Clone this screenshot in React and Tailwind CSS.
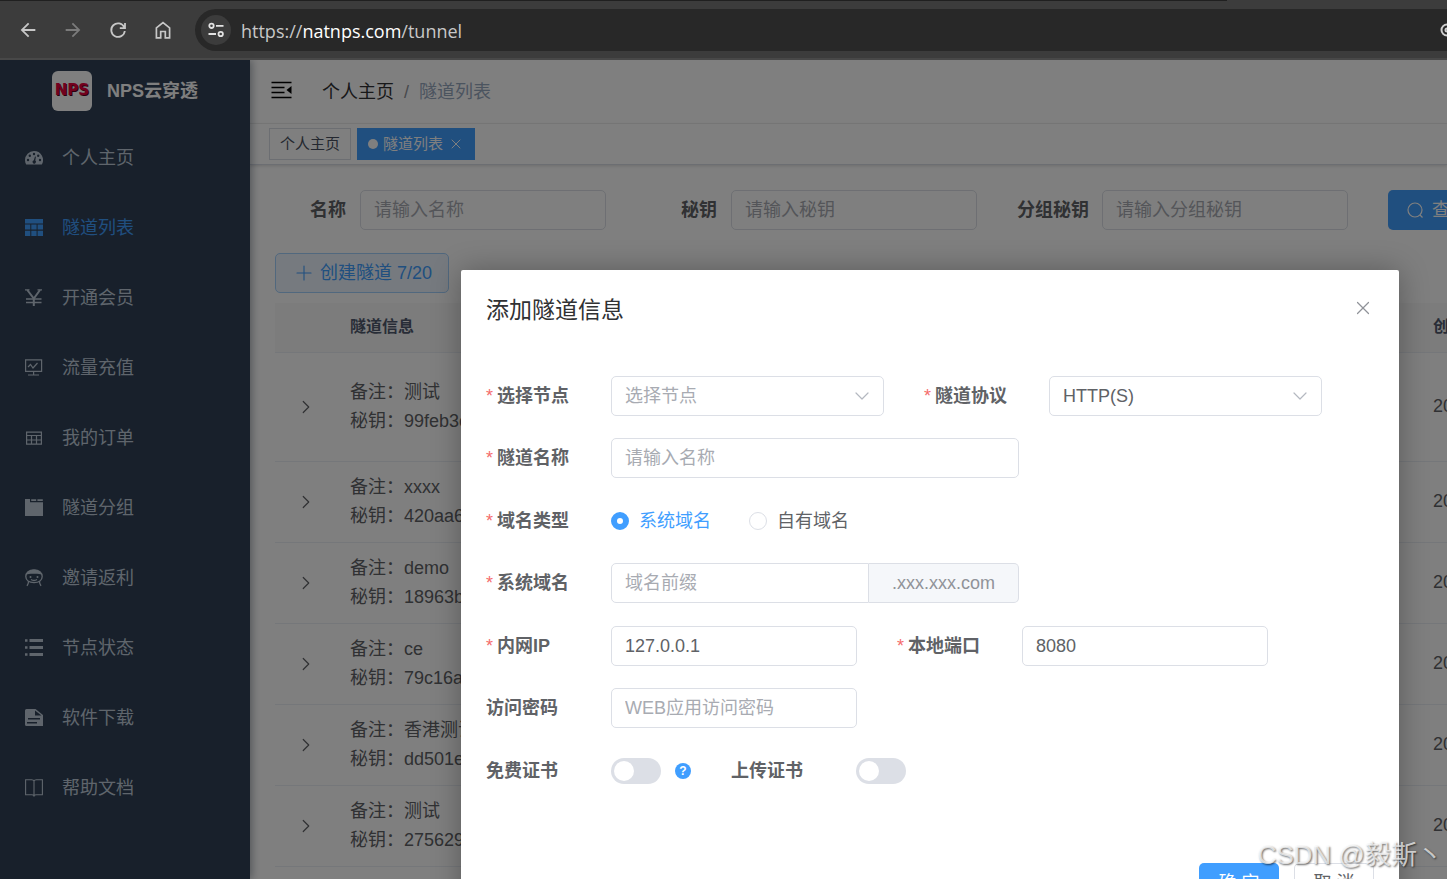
import { useState } from "react";
import { MdArrowBack, MdArrowForward } from "react-icons/md";
import { ChevronDown, ChevronRight, Plus, X } from "lucide-react";

const menus = [
  { name: "个人主页", icon: "dashboard" },
  { name: "隧道列表", icon: "table" },
  { name: "开通会员", icon: "yen" },
  { name: "流量充值", icon: "board" },
  { name: "我的订单", icon: "grid" },
  { name: "隧道分组", icon: "folder" },
  { name: "邀请返利", icon: "people" },
  { name: "节点状态", icon: "list" },
  { name: "软件下载", icon: "file" },
  { name: "帮助文档", icon: "book" },
];

const tunnels = [
  { remark: "测试", secret: "99feb3e" },
  { remark: "xxxx", secret: "420aa6" },
  { remark: "demo", secret: "18963b" },
  { remark: "ce", secret: "79c16a" },
  { remark: "香港测试", secret: "dd501e" },
  { remark: "测试", secret: "275629" },
  { remark: "", secret: "" },
];

const filters = [
  { id: "q-name", label: "名称", placeholder: "请输入名称" },
  { id: "q-key", label: "秘钥", placeholder: "请输入秘钥" },
  { id: "q-group", label: "分组秘钥", placeholder: "请输入分组秘钥" },
];

const icons = {
  dashboard: (
    <>
      <path
        fill="currentColor"
        d="M9 2a9 9 0 0 0-9 9c0 1.700.4 3.200 1.200 4.500h15.600A9 9 0 0 0 9 2Z"
      />
      <g className="fill-[#304156]">
        <circle cx="3" cy="11" r="1.200" />
        <circle cx="4.800" cy="6.800" r="1.200" />
        <circle cx="9" cy="5" r="1.200" />
        <circle cx="13.200" cy="6.800" r="1.200" />
        <circle cx="15" cy="11" r="1.200" />
        <path d="m10 7.500.9.200-.6 3.800a1.700 1.700 0 1 1-1.500-.3Z" />
      </g>
    </>
  ),
  table: (
    <path
      fill="currentColor"
      d="M0 0h18v4.500H0zM0 5.500h5.300v5H0zM6.300 5.500h5.300v5H6.300zM12.600 5.500H18v5h-5.400zM0 11.700h5.300v5.300H0zM6.300 11.700h5.300v5.300H6.300zM12.600 11.700H18v5.300h-5.400z"
    />
  ),
  yen: (
    <>
      <path
        stroke="currentColor"
        fill="none"
        strokeWidth="2"
        d="M2.300 1 8.800 9.500 15 1M8.800 9v8"
      />
      <path
        stroke="currentColor"
        fill="none"
        strokeWidth="1.300"
        d="M0 .8h4.500M12.500.8H17M1 10h15.500M1 13.500h15.500"
      />
    </>
  ),
  board: (
    <path
      stroke="currentColor"
      fill="none"
      strokeWidth="1.200"
      d="M.6.8h16v11.500H.6zM8.600 12.300v3.700M3 16h11M3 8l2.500-2.500L8 9l4.500-5"
    />
  ),
  grid: (
    <path
      stroke="currentColor"
      fill="none"
      strokeWidth="1.200"
      d="M1.600 3.200h14.800v12H1.600zM1.600 6.500h14.800M1.600 11h14.800M6.500 6.500v8.700M11.500 6.500v8.700"
    />
  ),
  folder: (
    <path
      fill="currentColor"
      d="M0 0h5v3.200h13V17H0zM6.200.3h5v1.600h-5zM12.400.3h5.400v1.600h-5.400z"
    />
  ),
  people: (
    <>
      <path
        stroke="currentColor"
        fill="none"
        strokeWidth="1.300"
        d="M9 .8C4 .8.8 3.900.8 7.500S4 13.600 9 13.600s8.200-2.500 8.200-6.100S14 .8 9 .8ZM3.500 12.800c0 2-.8 2.800-1.500 4M14.500 12.800c0 2 .8 2.800 1.500 4M6 10.500c1.800 1.200 4.200 1.200 6 0"
      />
      <path
        fill="currentColor"
        d="M9 .8C5 .8 2 3 1.500 5.500 5 4.800 7 4.800 9 4.800s4 0 7.500.7C16 3 13 .8 9 .8Z"
      />
      <circle cx="5.500" cy="8" r="1" fill="currentColor" />
      <circle cx="12.500" cy="8" r="1" fill="currentColor" />
    </>
  ),
  list: (
    <path
      fill="currentColor"
      d="M0 .2h2.500v2.500H0zM4.500 0H18v3H4.500zM0 7.200h2.500v2.500H0zM4.500 7H18v3H4.500zM0 14.200h2.500v2.500H0zM4.500 14H18v3H4.500z"
    />
  ),
  file: (
    <path
      fill="currentColor"
      fillRule="evenodd"
      d="M1.500 0h9L18 6v11H1.500A1.500 1.500 0 0 1 0 15.500v-14A1.500 1.500 0 0 1 1.500 0ZM10 1.500V6.500h6.500ZM3 9v1.400h12V9ZM2 13v1.400h10V13Z"
    />
  ),
  book: (
    <path
      stroke="currentColor"
      fill="none"
      strokeWidth="1.100"
      d="M.6.800h6c1.300 0 2.200.4 2.400 1.200.2-.8 1.100-1.200 2.400-1.200h6v15h-6c-1.300 0-2.200.3-2.400 1-.2-.7-1.100-1-2.400-1h-6zM9 2v14.500"
    />
  ),
};

function MenuIcon({ name }) {
  return (
    <svg viewBox="0 0 18 18" className="h-[18px] w-[18px] shrink-0">
      {icons[name]}
    </svg>
  );
}

function BrowserBar() {
  return (
    <div className="shrink-0 bg-[#3c3c3c]">
      <div className="mr-[220px] h-px bg-[#202020]"></div>
      <div className="flex h-[59px] items-center border-b-2 border-[#484848] text-[#c7c7c7]">
        <div className="flex w-[195px] shrink-0 items-center gap-[23px] pl-[17px]">
          <button aria-label="Back">
            <MdArrowBack className="h-[22px] w-[22px]" />
          </button>
          <button aria-label="Forward" className="text-[#7b7b7b]">
            <MdArrowForward className="h-[22px] w-[22px]" />
          </button>
          <button aria-label="Reload">
            <svg viewBox="0 0 22 22" className="h-[22px] w-[22px]">
              <path
                d="M17.200 8.200A6.800 6.800 0 1 0 17.800 12M18 4v5.200h-5.200"
                fill="none"
                stroke="currentColor"
                strokeWidth="1.800"
              />
            </svg>
          </button>
          <button aria-label="Home">
            <svg viewBox="0 0 22 22" className="h-[22px] w-[22px]">
              <path
                d="M4.400 18.800V8.800L11 3.500l6.600 5.300v10h-4.300v-6.300H8.700v6.300Z"
                fill="none"
                stroke="currentColor"
                strokeWidth="1.700"
              />
            </svg>
          </button>
        </div>
        <div className="flex h-[42px] min-w-0 flex-1 items-center rounded-l-full bg-[#282828] pl-1.5">
          <span className="flex h-[30px] w-[30px] shrink-0 items-center justify-center rounded-full bg-[#3c3c3c]">
            <svg
              viewBox="0 0 18 18"
              className="h-[18px] w-[18px]"
              fill="none"
              stroke="#e3e3e3"
              strokeWidth="1.800"
            >
              <circle cx="4.500" cy="4.800" r="2.200" />
              <path d="M9 4.800h7.500M1.500 13h7.500" />
              <circle cx="13.700" cy="13" r="2.200" />
            </svg>
          </span>
          <span className="ml-[10px] pt-0.5 font-['Open_Sans'] text-lg text-[#c7c7c7]">
            https://<span className="text-white">natnps.com</span>/tunnel
          </span>
          <svg
            viewBox="0 0 7 14"
            className="ml-auto h-[14px] w-[7px]"
            fill="none"
            stroke="#d0d0d0"
            strokeWidth="2"
          >
            <circle cx="7" cy="7" r="5.500" />
            <circle cx="7" cy="7" r="1.500" />
          </svg>
        </div>
      </div>
    </div>
  );
}

function Sidebar() {
  return (
    <aside className="z-10 w-[250px] shrink-0 bg-[#304156] shadow-[2px_0_8px_rgba(0,21,41,0.35)]">
      <div className="flex h-[62px] items-center justify-center gap-[15px]">
        <span className="flex h-10 w-10 items-center justify-center rounded-md bg-white font-['DejaVu_Sans'] text-[15px] font-bold text-[#e6003c] [text-shadow:1px_1px_0_#55001c]">
          NPS
        </span>
        <h1 className="text-lg font-bold text-white">NPS云穿透</h1>
      </div>
      <nav>
        {menus.map((menu, index) => (
          <a
            key={index}
            href="#"
            className={`flex h-[70px] items-center gap-[19px] pt-0.5 pl-[25px] ${
              index === 1 ? "text-[#409eff]" : "text-[#bfcbd9]"
            }`}
          >
            <MenuIcon name={menu.icon} />
            {menu.name}
          </a>
        ))}
      </nav>
    </aside>
  );
}

function Navbar() {
  return (
    <>
      <header className="flex h-16 items-center border-b border-[#f0f0f0] bg-white pl-[21px]">
        <button aria-label="收起菜单" className="pb-1">
          <svg viewBox="0 0 21 18" className="h-[18px] w-[21px]">
            <path
              d="M.5 1.500h20M.5 6.500h13M.5 11.500h13M.5 16.500h20"
              stroke="#000"
              strokeWidth="1.700"
            />
            <path d="M20.500 5v8l-5-4Z" />
          </svg>
        </button>
        <div className="ml-[30px] flex items-center gap-[10px]">
          <a href="#" className="text-[#303133]">
            个人主页
          </a>
          <span className="text-[#909399]">/</span>
          <span className="text-[#97a8be]">隧道列表</span>
        </div>
      </header>
      <div className="flex h-[41px] items-center gap-1.5 border-b border-[#d8dce5] bg-white pl-[19px] text-[15px] shadow-[0_1px_3px_rgba(0,0,0,0.15)]">
        <a
          href="#"
          className="flex h-8 items-center border border-[#d8dce5] px-[10px] text-[#495060]"
        >
          个人主页
        </a>
        <a
          href="#"
          className="flex h-8 items-center gap-[5px] bg-[#409eff] px-[11px] text-white"
        >
          <span className="h-[10px] w-[10px] rounded-full bg-white"></span>
          隧道列表
          <X className="h-4 w-4" strokeWidth={1.5} />
        </a>
      </div>
    </>
  );
}

function TunnelTable() {
  return (
    <table className="mt-[10px] w-full min-w-[1400px] table-fixed text-left">
      <colgroup>
        <col className="w-[61px]" />
        <col className="w-[1083px]" />
        <col />
      </colgroup>
      <thead>
        <tr className="h-[49px] border-b border-[#ebeef5] bg-[#f8f8f9] text-base text-[#515a6e]">
          <th></th>
          <th className="px-[14px]">隧道信息</th>
          <th className="px-[14px]">创建时间</th>
        </tr>
      </thead>
      <tbody className="text-[#606266]">
        {tunnels.map((tunnel, index) => (
          <tr
            key={index}
            className={`border-b border-[#ebeef5] leading-[29px] ${
              index === 0 ? "h-[109px]" : "h-[81px]"
            }`}
          >
            <td>
              <ChevronRight
                className="mx-auto h-[22px] w-[22px]"
                strokeWidth={1.3}
              />
            </td>
            <td className="px-[14px]">
              <div>备注：{tunnel.remark}</div>
              <div>秘钥：{tunnel.secret}</div>
            </td>
            <td className="px-[14px]">2024</td>
          </tr>
        ))}
      </tbody>
    </table>
  );
}

function FormItem({ label, id, required, children }) {
  return (
    <div className="flex h-10 items-center">
      <label
        htmlFor={id}
        className="flex w-[125px] shrink-0 items-center gap-1 font-bold"
      >
        {required && <span className="font-normal text-[#f56c6c]">*</span>}
        {label}
      </label>
      {children}
    </div>
  );
}

function Select({ id, options, muted }) {
  return (
    <div className="relative">
      <select
        id={id}
        className={`h-10 w-[273px] appearance-none rounded-[5px] border border-[#dcdfe6] bg-white px-[13px] ${
          muted ? "text-[#a8abb2]" : "text-[#606266]"
        }`}
      >
        {options.map((option) => (
          <option key={option}>{option}</option>
        ))}
      </select>
      <ChevronDown
        className="pointer-events-none absolute top-2 right-[10px] h-6 w-6 text-[#b4b8c0]"
        strokeWidth={1.2}
      />
    </div>
  );
}

const inputClass =
  "h-10 rounded-[5px] border border-[#dcdfe6] bg-white px-[13px] placeholder:text-[#a8abb2]";
const switchClass =
  "flex h-[26px] w-[50px] appearance-none items-center rounded-full bg-[#dcdfe6] px-[3px] before:h-5 before:w-5 before:rounded-full before:bg-white";

function TunnelDialog() {
  const [domainType, setDomainType] = useState("系统域名");

  return (
    <div
      role="dialog"
      aria-label="添加隧道信息"
      className="mt-[210px] mr-12 ml-[461px] min-w-[900px] flex-1 self-start rounded-xs bg-white px-[25px] pt-[25px] pb-[25px] text-[#606266] shadow-[0_1px_30px_rgba(0,0,0,0.3)]"
    >
      <div className="flex h-[30px] items-center justify-between">
        <h2 className="pt-0.5 text-[23px] text-[#303133]">添加隧道信息</h2>
        <button aria-label="关闭" className="pb-1 text-[#909399]">
          <X className="h-[22px] w-[22px]" strokeWidth={1.3} />
        </button>
      </div>
      <form className="mt-[51px] flex flex-col gap-[23px]">
        <div className="flex flex-col gap-[22px]">
          <div className="flex gap-10">
            <FormItem label="选择节点" id="node" required>
              <Select id="node" options={["选择节点"]} muted />
            </FormItem>
            <FormItem label="隧道协议" id="protocol" required>
              <Select id="protocol" options={["HTTP(S)"]} />
            </FormItem>
          </div>
          <FormItem label="隧道名称" id="name" required>
            <input
              id="name"
              placeholder="请输入名称"
              className={`${inputClass} w-[408px]`}
            />
          </FormItem>
        </div>
        <div className="flex flex-col gap-[22px]">
          <FormItem label="域名类型" id="type-系统域名" required>
            <div className="flex gap-[38px]">
              {["系统域名", "自有域名"].map((type) => (
                <label
                  key={type}
                  className={`flex items-center gap-[10px] ${
                    domainType === type ? "text-[#409eff]" : ""
                  }`}
                >
                  <input
                    id={`type-${type}`}
                    type="radio"
                    name="domainType"
                    checked={domainType === type}
                    onChange={() => setDomainType(type)}
                    className="h-[18px] w-[18px] appearance-none rounded-full border border-[#dcdfe6] bg-white checked:border-[6px] checked:border-[#409eff]"
                  />
                  {type}
                </label>
              ))}
            </div>
          </FormItem>
          <FormItem label="系统域名" id="prefix" required>
            <div className="flex w-[408px]">
              <input
                id="prefix"
                placeholder="域名前缀"
                className="h-10 min-w-0 flex-1 rounded-l-[5px] border border-[#dcdfe6] px-[13px] placeholder:text-[#a8abb2]"
              />
              <span className="flex h-10 w-[150px] items-center justify-center rounded-r-[5px] border border-l-0 border-[#dcdfe6] bg-[#f5f7fa] text-[#909399]">
                .xxx.xxx.com
              </span>
            </div>
          </FormItem>
        </div>
        <div className="flex flex-col gap-[22px]">
          <div className="flex gap-10">
            <FormItem label="内网IP" id="ip" required>
              <input
                id="ip"
                defaultValue="127.0.0.1"
                className={`${inputClass} w-[246px]`}
              />
            </FormItem>
            <FormItem label="本地端口" id="port" required>
              <input
                id="port"
                defaultValue="8080"
                className={`${inputClass} w-[246px]`}
              />
            </FormItem>
          </div>
          <FormItem label="访问密码" id="password">
            <input
              id="password"
              placeholder="WEB应用访问密码"
              className={`${inputClass} w-[246px]`}
            />
          </FormItem>
        </div>
        <div className="flex gap-10">
          <FormItem label="免费证书" id="freeCert">
            <input
              id="freeCert"
              type="checkbox"
              role="switch"
              className={switchClass}
            />
            <span className="ml-[14px] flex h-4 w-4 items-center justify-center rounded-full bg-[#409eff] text-xs font-bold text-white">
              ?
            </span>
          </FormItem>
          <FormItem label="上传证书" id="uploadCert">
            <input
              id="uploadCert"
              type="checkbox"
              role="switch"
              className={switchClass}
            />
          </FormItem>
        </div>
      </form>
      <div className="mt-[72px] flex justify-end gap-[15px]">
        <button className="h-10 w-20 rounded-[5px] bg-[#409eff] text-white">
          确 定
        </button>
        <button className="h-10 w-20 rounded-[5px] border border-[#dcdfe6]">
          取 消
        </button>
      </div>
    </div>
  );
}

export default function App() {
  return (
    <div className="flex h-screen flex-col overflow-hidden font-['Liberation_Sans','Noto_Sans_CJK_SC',sans-serif] text-lg">
      <BrowserBar />
      <div className="relative flex min-h-0 flex-1 overflow-hidden">
        <Sidebar />
        <main className="min-w-0 flex-1 overflow-hidden bg-white">
          <Navbar />
          <div className="pt-[25px] pl-[25px]">
            <div className="flex gap-10">
              {filters.map((filter) => (
                <div key={filter.id} className="flex shrink-0 items-center">
                  <label
                    htmlFor={filter.id}
                    className="w-[85px] pr-[14px] text-right font-bold whitespace-nowrap text-[#606266]"
                  >
                    {filter.label}
                  </label>
                  <input
                    id={filter.id}
                    placeholder={filter.placeholder}
                    className={`${inputClass} w-[246px]`}
                  />
                </div>
              ))}
              <button className="flex h-10 shrink-0 items-center gap-2 rounded-[5px] bg-[#409eff] px-[19px] text-white">
                <svg
                  viewBox="0 0 17 17"
                  className="h-[17px] w-[17px]"
                  fill="none"
                  stroke="currentColor"
                  strokeWidth="1.200"
                >
                  <circle cx="8" cy="8" r="7" />
                  <path d="m13 13 2.500 2.500" />
                </svg>
                查询
              </button>
            </div>
            <button className="mt-[23px] flex h-10 items-center gap-1 rounded-[5px] border border-[#a3d0fd] bg-[#ecf5ff] px-4 text-[#409eff]">
              <Plus className="h-6 w-6" strokeWidth={1.1} />
              创建隧道 7/20
            </button>
            <TunnelTable />
          </div>
        </main>
        <div className="absolute inset-0 z-20 flex overflow-hidden bg-black/50">
          <TunnelDialog />
        </div>
        <div className="absolute right-1 bottom-1 z-30 text-[26px] text-white/70 [text-shadow:1px_1px_2px_rgba(0,0,0,0.6)]">
          CSDN @毅斯丶
        </div>
      </div>
    </div>
  );
}
